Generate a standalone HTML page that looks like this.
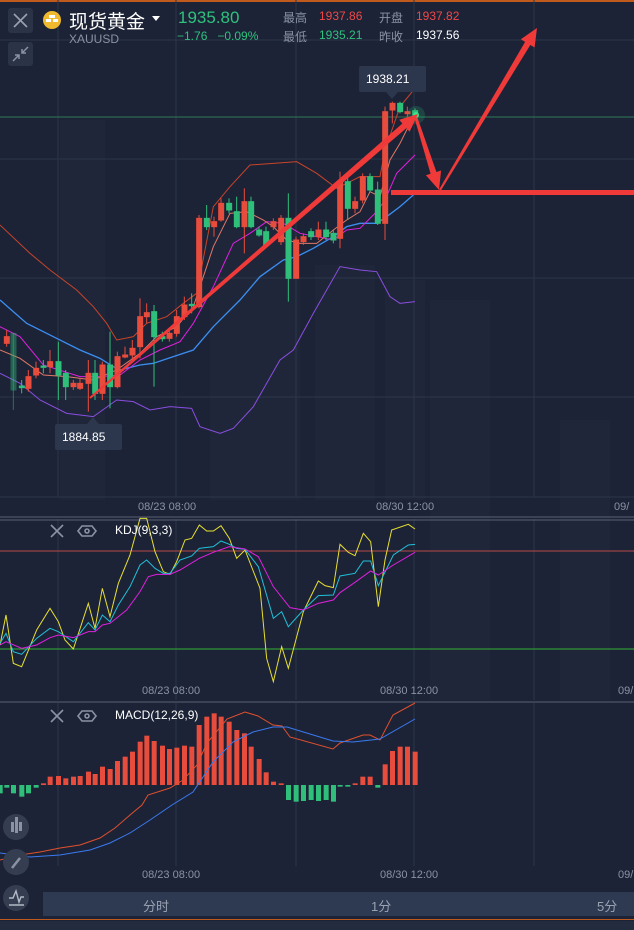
<!DOCTYPE html>
<html><head><meta charset="utf-8"><style>
html,body{margin:0;padding:0;background:#1c2336;width:634px;height:930px;overflow:hidden}
body{position:relative;font-family:"Liberation Sans","Noto Sans CJK SC",sans-serif}
.t{position:absolute;white-space:nowrap}
</style></head><body>
<svg width="634" height="930" style="position:absolute;left:0;top:0" xmlns="http://www.w3.org/2000/svg">
<rect width="634" height="930" fill="#1c2336"/>
<rect x="0" y="0" width="634" height="2" fill="#c0591c"/>
<g fill="#1f2639">
<rect x="210" y="230" width="90" height="270"/><rect x="315" y="265" width="60" height="235"/><rect x="385" y="280" width="40" height="220"/>
<rect x="60" y="120" width="45" height="380"/><rect x="430" y="300" width="60" height="400"/><rect x="560" y="420" width="50" height="280"/>
</g>
<g stroke="#2c3549" stroke-width="1">
<line x1="58" y1="0" x2="58" y2="497"/><line x1="176" y1="0" x2="176" y2="497"/><line x1="296" y1="0" x2="296" y2="497"/><line x1="414" y1="0" x2="414" y2="497"/><line x1="534" y1="0" x2="534" y2="497"/>
<line x1="0" y1="40" x2="634" y2="40"/><line x1="0" y1="159" x2="634" y2="159"/><line x1="0" y1="278" x2="634" y2="278"/><line x1="0" y1="397" x2="634" y2="397"/><line x1="0" y1="497" x2="634" y2="497"/>
<line x1="58" y1="519" x2="58" y2="700"/><line x1="176" y1="519" x2="176" y2="700"/><line x1="296" y1="519" x2="296" y2="700"/><line x1="414" y1="519" x2="414" y2="700"/><line x1="534" y1="519" x2="534" y2="700"/>
<line x1="58" y1="703" x2="58" y2="866"/><line x1="176" y1="703" x2="176" y2="866"/><line x1="296" y1="703" x2="296" y2="866"/><line x1="414" y1="703" x2="414" y2="866"/><line x1="534" y1="703" x2="534" y2="866"/>
</g>
<line x1="0" y1="517" x2="634" y2="517" stroke="#5a6275"/><line x1="0" y1="520" x2="634" y2="520" stroke="#5a6275"/>
<line x1="0" y1="702" x2="634" y2="702" stroke="#5a6275"/>
<line x1="0" y1="117" x2="634" y2="117" stroke="#2e7a55" stroke-width="1"/>

<g transform="translate(0,60) scale(0.33333)" fill="none" stroke-width="3">
<polyline stroke="#c8442a" points="0,495 90,580 150,630 230,690 280,740 320,790 350,840 400,830 440,790 500,770 550,730 590,700 640,440 690,380 750,315 820,310 890,305 950,340 1010,385 1080,350 1140,350 1155,270 1200,140 1245,85"/>
<polyline stroke="#8a4ee0" points="0,940 60,970 120,1020 200,1060 280,1070 350,1020 400,1025 450,1050 510,1040 575,1045 600,1100 660,1120 700,1105 760,1040 840,900 880,870 940,760 1020,620 1080,630 1130,635 1170,710 1200,730 1245,725"/>
<polyline stroke="#3a8ef0" stroke-width="4" points="0,720 80,790 160,830 240,870 300,895 340,920 360,930 420,915 460,910 520,890 580,870 640,800 720,720 780,650 850,600 890,590 940,565 1000,530 1040,500 1080,490 1130,490 1160,470 1200,440 1240,405"/>
<polyline stroke="#e020e0" points="0,800 60,830 130,915 240,950 300,950 360,945 420,900 480,870 540,845 580,790 640,680 700,550 750,520 800,485 850,490 900,520 950,530 1000,540 1040,510 1080,505 1130,455 1155,420 1190,340 1245,285"/>
<polyline stroke="#e07868" points="0,870 60,895 130,945 200,950 280,960 350,930 420,880 470,830 530,800 580,740 640,560 690,460 740,455 790,480 820,500 860,540 900,550 950,550 1000,510 1040,480 1080,455 1110,395 1140,410 1170,300 1200,250 1245,160"/>
<g stroke="#e84c3d" fill="#e84c3d">
<line x1="20" y1="810" x2="20" y2="860"/><rect x="13" y="830" width="15" height="20"/>
<line x1="85" y1="930" x2="85" y2="995"/><rect x="78" y="950" width="15" height="35"/>
<line x1="108" y1="905" x2="108" y2="955"/><rect x="101" y="925" width="15" height="20"/>
<line x1="150" y1="870" x2="150" y2="940"/><rect x="143" y="905" width="15" height="15"/>
<line x1="220" y1="960" x2="220" y2="990"/><rect x="213" y="970" width="15" height="10"/>
<line x1="240" y1="955" x2="240" y2="990"/><rect x="233" y="970" width="15" height="15"/>
<line x1="265" y1="900" x2="265" y2="1055"/><rect x="258" y="940" width="15" height="30"/>
<line x1="307" y1="905" x2="307" y2="1020"/><rect x="300" y="915" width="15" height="85"/>
<line x1="352" y1="875" x2="352" y2="985"/><rect x="345" y="890" width="15" height="90"/>
<line x1="375" y1="860" x2="375" y2="895"/><rect x="368" y="885" width="15" height="6"/>
<line x1="397" y1="840" x2="397" y2="900"/><rect x="390" y="865" width="15" height="20"/>
<line x1="420" y1="715" x2="420" y2="895"/><rect x="413" y="770" width="15" height="90"/>
<line x1="440" y1="730" x2="440" y2="790"/><rect x="433" y="758" width="15" height="12"/>
<line x1="508" y1="810" x2="508" y2="845"/><rect x="501" y="820" width="15" height="15"/>
<line x1="530" y1="750" x2="530" y2="830"/><rect x="523" y="770" width="15" height="50"/>
<line x1="553" y1="710" x2="553" y2="780"/><rect x="546" y="735" width="15" height="35"/>
<line x1="597" y1="465" x2="597" y2="745"/><rect x="590" y="475" width="15" height="265"/>
<line x1="642" y1="470" x2="642" y2="530"/><rect x="635" y="485" width="15" height="15"/>
<line x1="663" y1="415" x2="663" y2="485"/><rect x="656" y="430" width="15" height="50"/>
<line x1="733" y1="385" x2="733" y2="580"/><rect x="726" y="425" width="15" height="75"/>
<line x1="820" y1="475" x2="820" y2="510"/><rect x="813" y="485" width="15" height="15"/>
<line x1="843" y1="465" x2="843" y2="555"/><rect x="836" y="475" width="15" height="70"/>
<line x1="888" y1="530" x2="888" y2="655"/><rect x="881" y="540" width="15" height="115"/>
<line x1="910" y1="520" x2="910" y2="555"/><rect x="903" y="530" width="15" height="15"/>
<line x1="955" y1="485" x2="955" y2="540"/><rect x="948" y="510" width="15" height="20"/>
<line x1="1020" y1="335" x2="1020" y2="565"/><rect x="1013" y="365" width="15" height="170"/>
<line x1="1065" y1="410" x2="1065" y2="460"/><rect x="1058" y="425" width="15" height="20"/>
<line x1="1088" y1="340" x2="1088" y2="430"/><rect x="1081" y="350" width="15" height="70"/>
<line x1="1155" y1="140" x2="1155" y2="540"/><rect x="1148" y="155" width="15" height="335"/>
<line x1="1177" y1="125" x2="1177" y2="190"/><rect x="1170" y="130" width="15" height="20"/>
<line x1="1222" y1="140" x2="1222" y2="170"/><rect x="1215" y="155" width="15" height="6"/>
</g>
<g stroke="#2fbf7a" fill="#2fbf7a">
<line x1="40" y1="820" x2="40" y2="1050" opacity=".5"/><rect x="33" y="820" width="15" height="170" opacity=".4"/>
<line x1="65" y1="960" x2="65" y2="1000"/><rect x="58" y="978" width="15" height="5"/>
<line x1="130" y1="900" x2="130" y2="940"/><rect x="123" y="918" width="15" height="4"/>
<line x1="175" y1="845" x2="175" y2="1020"/><rect x="168" y="905" width="15" height="40"/>
<line x1="197" y1="930" x2="197" y2="1020"/><rect x="190" y="940" width="15" height="40"/>
<line x1="285" y1="900" x2="285" y2="1020"/><rect x="278" y="940" width="15" height="60"/>
<line x1="330" y1="815" x2="330" y2="1045"/><rect x="323" y="915" width="15" height="65"/>
<line x1="462" y1="735" x2="462" y2="980"/><rect x="455" y="755" width="15" height="75"/>
<line x1="487" y1="815" x2="487" y2="845"/><rect x="480" y="830" width="15" height="6"/>
<line x1="575" y1="700" x2="575" y2="760"/><rect x="568" y="733" width="15" height="4"/>
<line x1="620" y1="435" x2="620" y2="510"/><rect x="613" y="475" width="15" height="25"/>
<line x1="687" y1="415" x2="687" y2="460"/><rect x="680" y="430" width="15" height="20"/>
<line x1="710" y1="410" x2="710" y2="505"/><rect x="703" y="455" width="15" height="45"/>
<line x1="753" y1="410" x2="753" y2="505"/><rect x="746" y="425" width="15" height="75"/>
<line x1="777" y1="500" x2="777" y2="530"/><rect x="770" y="510" width="15" height="15"/>
<line x1="798" y1="500" x2="798" y2="560"/><rect x="791" y="515" width="15" height="40"/>
<line x1="865" y1="400" x2="865" y2="725"/><rect x="858" y="475" width="15" height="180"/>
<line x1="933" y1="505" x2="933" y2="540"/><rect x="926" y="515" width="15" height="15"/>
<line x1="978" y1="485" x2="978" y2="540"/><rect x="971" y="510" width="15" height="20"/>
<line x1="1000" y1="510" x2="1000" y2="550"/><rect x="993" y="520" width="15" height="20"/>
<line x1="1043" y1="340" x2="1043" y2="480"/><rect x="1036" y="365" width="15" height="80"/>
<line x1="1110" y1="340" x2="1110" y2="395"/><rect x="1103" y="350" width="15" height="40"/>
<line x1="1133" y1="365" x2="1133" y2="495"/><rect x="1126" y="390" width="15" height="100"/>
<line x1="1200" y1="125" x2="1200" y2="160"/><rect x="1193" y="130" width="15" height="25"/>
<line x1="1245" y1="145" x2="1245" y2="170"/><rect x="1238" y="152" width="15" height="13"/>
</g>
</g>
<circle cx="416" cy="115" r="9" fill="#2fbf7a" opacity=".2"/><circle cx="416" cy="115" r="3" fill="#3ee08a"/>
<g fill="#f03a3a">
<polygon points="90.7,398.8 406.4,128.1 409.6,131.8 418,114 399.2,119.8 402.4,123.5 89.3,397.2"/>
<polygon points="417.4,117.5 436.4,172 441.1,170.5 439,190 425.9,175.3 430.6,173.8 414.6,118.5"/>
<polygon points="440.9,190.5 530.3,45 534.6,47.5 537,28 520.8,39.3 525.1,41.9 439.1,189.5"/>
<rect x="391" y="190" width="243" height="5"/>
</g>
<rect x="359" y="66" width="67" height="26" rx="2" fill="#2c364d"/><polygon points="386,92 398,92 392,99" fill="#2c364d"/>
<rect x="55" y="424" width="67" height="26" rx="2" fill="#2c364d"/><polygon points="87,424 99,424 93,417" fill="#2c364d"/>

<line x1="0" y1="551" x2="634" y2="551" stroke="#b84848"/>
<line x1="0" y1="649" x2="634" y2="649" stroke="#34b034"/>
<g transform="translate(0,495) scale(0.33333)" fill="none" stroke-width="3">
<polyline stroke="#e8e030" points="0,450 18,360 40,505 65,515 110,405 150,340 175,380 195,435 220,462 265,325 285,400 307,280 330,365 355,265 390,180 420,70 440,70 465,170 490,230 510,238 530,200 555,135 575,130 598,90 620,108 640,108 663,92 688,130 710,190 735,165 780,280 800,490 820,560 845,455 865,520 910,350 955,258 975,272 1000,278 1020,148 1045,172 1065,182 1090,115 1112,140 1135,335 1155,195 1175,105 1225,88 1245,102"/>
<polyline stroke="#20c0d8" points="0,445 18,415 40,470 65,478 110,430 150,400 175,410 220,440 265,383 285,405 307,360 330,380 355,330 390,275 420,210 440,195 465,220 490,235 510,235 540,195 575,183 598,160 640,155 663,138 688,148 710,160 735,163 775,215 820,370 845,350 865,395 910,345 955,302 1000,300 1020,243 1065,235 1090,198 1112,198 1135,272 1180,180 1225,150 1245,148"/>
<polyline stroke="#e020e0" points="0,450 18,440 65,460 110,450 150,428 175,420 220,428 265,410 285,410 307,390 330,385 380,345 420,290 445,245 470,238 510,238 540,225 598,190 640,172 688,155 735,162 775,185 820,275 870,338 910,345 955,325 1000,315 1020,293 1065,262 1112,228 1135,240 1180,210 1245,172"/>
</g>
<g transform="translate(0,495) scale(0.33333)">
<g fill="#e84c3d">
<rect x="123" y="865" width="15" height="5"/><rect x="143" y="845" width="15" height="25"/><rect x="168" y="843" width="15" height="27"/><rect x="190" y="850" width="15" height="20"/><rect x="213" y="845" width="15" height="25"/><rect x="233" y="843" width="15" height="27"/><rect x="258" y="830" width="15" height="40"/><rect x="278" y="837" width="15" height="33"/><rect x="300" y="815" width="15" height="55"/><rect x="323" y="822" width="15" height="48"/><rect x="345" y="798" width="15" height="72"/><rect x="368" y="785" width="15" height="85"/><rect x="390" y="770" width="15" height="100"/><rect x="413" y="740" width="15" height="130"/><rect x="433" y="722" width="15" height="148"/><rect x="455" y="738" width="15" height="132"/><rect x="480" y="752" width="15" height="118"/><rect x="501" y="762" width="15" height="108"/><rect x="523" y="758" width="15" height="112"/><rect x="546" y="752" width="15" height="118"/><rect x="568" y="755" width="15" height="115"/><rect x="590" y="690" width="15" height="180"/><rect x="613" y="665" width="15" height="205"/><rect x="635" y="655" width="15" height="215"/><rect x="656" y="665" width="15" height="205"/><rect x="680" y="680" width="15" height="190"/><rect x="703" y="705" width="15" height="165"/><rect x="726" y="715" width="15" height="155"/><rect x="746" y="755" width="15" height="115"/><rect x="770" y="792" width="15" height="78"/><rect x="791" y="832" width="15" height="38"/><rect x="813" y="860" width="15" height="10"/><rect x="836" y="865" width="15" height="5"/><rect x="1058" y="865" width="15" height="5"/><rect x="1081" y="845" width="15" height="25"/><rect x="1103" y="845" width="15" height="25"/><rect x="1148" y="808" width="15" height="62"/><rect x="1170" y="768" width="15" height="102"/><rect x="1193" y="755" width="15" height="115"/><rect x="1215" y="755" width="15" height="115"/><rect x="1238" y="770" width="15" height="100"/>
</g>
<g fill="#2fbf7a">
<rect x="0" y="870" width="8" height="25"/><rect x="13" y="870" width="15" height="8"/><rect x="33" y="870" width="15" height="25"/><rect x="58" y="870" width="15" height="35"/><rect x="78" y="870" width="15" height="25"/><rect x="101" y="870" width="15" height="8"/><rect x="858" y="870" width="15" height="45"/><rect x="881" y="870" width="15" height="50"/><rect x="903" y="870" width="15" height="48"/><rect x="926" y="870" width="15" height="45"/><rect x="948" y="870" width="15" height="48"/><rect x="971" y="870" width="15" height="45"/><rect x="993" y="870" width="15" height="50"/><rect x="1013" y="870" width="15" height="5"/><rect x="1036" y="870" width="15" height="5"/><rect x="1126" y="870" width="15" height="8"/>
</g>
</g>
<g fill="none" stroke-width="1">
<polyline stroke="#e0502e" points="0,860 20,855 40,852 60,848 80,845 100,838 115,828 130,815 142,805 148,795 170,788 183,780 197,765 207,743 227,719 245,712 258,716 273,725 282,726 290,737 333,749 340,743 363,735 370,735 380,740 393,715 415,703"/>
<polyline stroke="#3a7af0" points="0,853 30,857 60,855 90,850 110,843 130,833 150,820 172,805 193,792 213,762 233,742 253,732 273,727 287,727 333,741 353,742 380,739 415,719"/>
</g>

<g stroke="#8a92a4" stroke-width="1.6" fill="none">
<path d="M51,525 L63,537 M63,525 L51,537"/><path d="M51,710 L63,722 M63,710 L51,722"/>
<polygon points="82,526 92,526 96,531 92,536 82,536 78,531"/><circle cx="87" cy="531" r="2"/>
<polygon points="82,711 92,711 96,716 92,721 82,721 78,716"/><circle cx="87" cy="716" r="2"/>
</g>
<rect x="8" y="8" width="25" height="25" rx="3" fill="#2b3346"/>
<path d="M14,14 L27,27 M27,14 L14,27" stroke="#9aa2b2" stroke-width="1.6"/>
<rect x="8" y="42" width="25" height="24" rx="3" fill="#2b3346"/>
<path d="M13,61 L19,55 M15,55 h4 v4 M28,47 L22,53 M26,53 h-4 v-4" stroke="#8a92a4" stroke-width="1.5" fill="none"/>
<circle cx="16" cy="827" r="13" fill="#353e51"/>
<g fill="#8a92a4"><rect x="11" y="822" width="3" height="10"/><rect x="15" y="817" width="3" height="16"/><rect x="19" y="822" width="3" height="9"/></g>
<circle cx="16" cy="862" r="13" fill="#353e51"/>
<path d="M12,868 L20,858" stroke="#8a92a4" stroke-width="2.5"/>
<circle cx="16" cy="898" r="13" fill="#353e51"/>
<path d="M9,898 L13,898 L16,891 L19,902 L21,897 L24,897 M9,905 H24" stroke="#b4bac6" stroke-width="1.4" fill="none"/>
<rect x="43" y="892" width="591" height="24" fill="#2e3a52"/>
<rect x="0" y="919" width="634" height="1" fill="#c0591c"/>
<rect x="0" y="921" width="634" height="9" fill="#232b3e"/>
<circle cx="52" cy="20" r="9" fill="#f0b92e"/>
<g fill="#fff"><rect x="49" y="15" width="6" height="3"/><rect x="46" y="19" width="5" height="3"/><rect x="53" y="19" width="5" height="3"/></g>
<polygon points="152,16 160,16 156,21" fill="#fff"/>
</svg>
<div class="t" style="left:69px;top:7px;font-size:19px;color:#fff">现货黄金</div>
<div class="t" style="left:69px;top:32px;font-size:12px;color:#8a92a4">XAUUSD</div>
<div class="t" style="left:178px;top:8px;font-size:17px;color:#2ec27e">1935.80</div>
<div class="t" style="left:177px;top:29px;font-size:12px;color:#2ec27e">−1.76&nbsp;&nbsp;&nbsp;−0.09%</div>
<div class="t" style="left:283px;top:9px;font-size:12px;color:#8a93a6">最高</div>
<div class="t" style="left:319px;top:9px;font-size:12px;color:#f04848">1937.86</div>
<div class="t" style="left:379px;top:9px;font-size:12px;color:#8a92a4">开盘</div>
<div class="t" style="left:416px;top:9px;font-size:12px;color:#f04848">1937.82</div>
<div class="t" style="left:283px;top:28px;font-size:12px;color:#8a92a4">最低</div>
<div class="t" style="left:319px;top:28px;font-size:12px;color:#2ec27e">1935.21</div>
<div class="t" style="left:379px;top:28px;font-size:12px;color:#8a92a4">昨收</div>
<div class="t" style="left:416px;top:28px;font-size:12px;color:#fff">1937.56</div>
<div class="t" style="left:366px;top:72px;font-size:12px;color:#fff">1938.21</div>
<div class="t" style="left:62px;top:430px;font-size:12px;color:#fff">1884.85</div>
<div class="t" style="left:138px;top:501px;font-size:11px;color:#8a92a4">08/23 08:00</div>
<div class="t" style="left:376px;top:501px;font-size:11px;color:#8a92a4">08/30 12:00</div>
<div class="t" style="left:614px;top:501px;font-size:11px;color:#8a92a4">09/</div>
<div class="t" style="left:115px;top:523px;font-size:12px;color:#fff">KDJ(9,3,3)</div>
<div class="t" style="left:142px;top:685px;font-size:11px;color:#8a92a4">08/23 08:00</div>
<div class="t" style="left:380px;top:685px;font-size:11px;color:#8a92a4">08/30 12:00</div>
<div class="t" style="left:618px;top:685px;font-size:11px;color:#8a92a4">09/</div>
<div class="t" style="left:115px;top:708px;font-size:12px;color:#fff">MACD(12,26,9)</div>
<div class="t" style="left:142px;top:869px;font-size:11px;color:#8a92a4">08/23 08:00</div>
<div class="t" style="left:380px;top:869px;font-size:11px;color:#8a92a4">08/30 12:00</div>
<div class="t" style="left:618px;top:869px;font-size:11px;color:#8a92a4">09/</div>
<div class="t" style="left:143px;top:896px;font-size:13px;color:#9aa2b2">分时</div>
<div class="t" style="left:371px;top:896px;font-size:13px;color:#9aa2b2">1分</div>
<div class="t" style="left:597px;top:896px;font-size:13px;color:#9aa2b2">5分</div>
</body></html>
